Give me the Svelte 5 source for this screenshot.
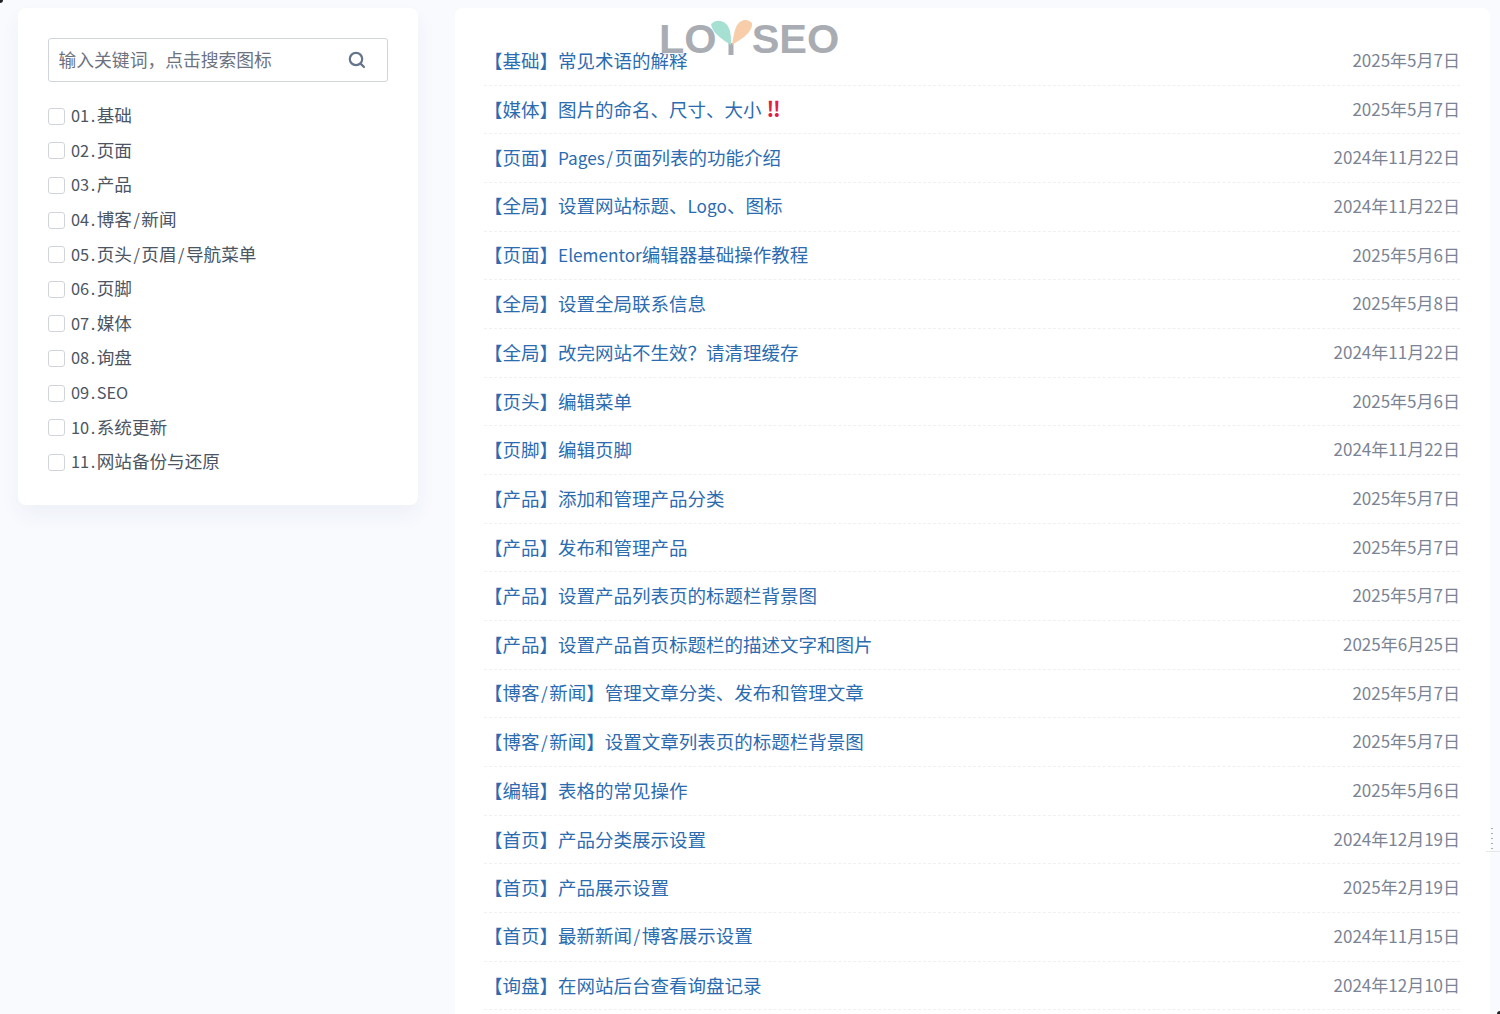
<script>
  const cats = ['01.基础','02.页面','03.产品','04.博客/新闻','05.页头/页眉/导航菜单','06.页脚','07.媒体','08.询盘','09.SEO','10.系统更新','11.网站备份与还原'];
  const rows = [
    ['【基础】常见术语的解释','2025年5月7日'],
    ['【媒体】图片的命名、尺寸、大小','2025年5月7日',true],
    ['【页面】Pages/页面列表的功能介绍','2024年11月22日'],
    ['【全局】设置网站标题、Logo、图标','2024年11月22日'],
    ['【页面】Elementor编辑器基础操作教程','2025年5月6日'],
    ['【全局】设置全局联系信息','2025年5月8日'],
    ['【全局】改完网站不生效？请清理缓存','2024年11月22日'],
    ['【页头】编辑菜单','2025年5月6日'],
    ['【页脚】编辑页脚','2024年11月22日'],
    ['【产品】添加和管理产品分类','2025年5月7日'],
    ['【产品】发布和管理产品','2025年5月7日'],
    ['【产品】设置产品列表页的标题栏背景图','2025年5月7日'],
    ['【产品】设置产品首页标题栏的描述文字和图片','2025年6月25日'],
    ['【博客/新闻】管理文章分类、发布和管理文章','2025年5月7日'],
    ['【博客/新闻】设置文章列表页的标题栏背景图','2025年5月7日'],
    ['【编辑】表格的常见操作','2025年5月6日'],
    ['【首页】产品分类展示设置','2024年12月19日'],
    ['【首页】产品展示设置','2025年2月19日'],
    ['【首页】最新新闻/博客展示设置','2024年11月15日'],
    ['【询盘】在网站后台查看询盘记录','2024年12月10日']
  ];
  // Latin runs and punctuation are set narrower / wider than the CJK around them
  const parts = (s) => s.split(/([A-Za-z0-9]+|[.\/])/).filter(Boolean).map((t) => ({
    t,
    c: /^[.\/]$/.test(t) ? 'pn' : /^[A-Za-z0-9]/.test(t) ? 'lat' : ''
  }));
</script>

{#snippet mixed(s)}{#each parts(s) as p}{#if p.c}<span class={p.c}>{p.t}</span>{:else}{p.t}{/if}{/each}{/snippet}

<div class="page">
  <aside class="side">
    <div class="search">
      <span class="ph">输入关键词，点击搜索图标</span>
      <svg width="18" height="18" viewBox="0 0 18 18" fill="none" stroke="#64748b" stroke-width="2.2" stroke-linecap="round"><circle cx="8" cy="8" r="6.2"/><path d="M12.6 12.6L16 16"/></svg>
    </div>
    <ul class="cats">
      {#each cats as c}
        <li><span class="box"></span><span>{@render mixed(c)}</span></li>
      {/each}
    </ul>
  </aside>
  <main class="list">
    {#each rows as r}
      <div class="row">
        <span class="title">{@render mixed(r[0])}{#if r[2]}<span class="bang">‼</span>{/if}</span>
        <span class="date">{r[1]}</span>
      </div>
    {/each}
    <div class="logo">
      <span>LO</span>
      <svg width="44" height="40" viewBox="0 0 44 40">
        <path d="M21 36V24" stroke="#a9adb3" stroke-width="5" fill="none"/>
        <path d="M1 5C7 -1 17 1 20 12C21 17 21 22 21 26C13 21 2 14 1 5Z" fill="#a5e0d3"/>
        <path d="M42 4C37 -1 30 0 26 8C24 13 23 20 22 26C30 21 43 14 42 4Z" fill="#f8cdaa"/>
      </svg>
      <span>SEO</span>
    </div>
  </main>
  <div class="tick"></div>
  <i class="corner tl"></i>
  <i class="corner br"></i>
</div>

<style>
  :global(body) {
    margin: 0;
    background: #f8fafe;
  }
  .page {
    position: relative;
    display: flex;
    align-items: flex-start;
    gap: 37px;
    height: 1014px;
    overflow: hidden;
    padding: 8px 10px 0 18px;
    box-sizing: border-box;
    font-family: "Noto Sans CJK SC", sans-serif;
  }
  .side {
    flex: none;
    width: 400px;
    height: 497px;
    box-sizing: border-box;
    padding: 30px 30px 0;
    background: #fff;
    border-radius: 8px;
    box-shadow: 0 10px 20px rgba(30, 50, 90, 0.05);
  }
  .search {
    display: flex;
    align-items: center;
    height: 44px;
    box-sizing: border-box;
    padding: 0 12px 0 9.5px;
    gap: 76px;
    border: 1px solid #d1d5db;
    border-radius: 3px;
  }
  .ph {
    font-size: 17.8px;
    line-height: 24px;
    padding-bottom: 2px;
    color: #6b7280;
  }
  .cats {
    list-style: none;
    margin: 16px 0 0;
    padding: 0;
  }
  .cats li {
    display: flex;
    align-items: center;
    gap: 6px;
    height: 34.6px;
    font-size: 17.6px;
    line-height: 24px;
    color: #4b5563;
  }
  .lat {
    font-size: 0.93em;
  }
  .pn {
    font-size: 0.93em;
    padding: 0 1.5px;
  }
  .box {
    flex: none;
    width: 15px;
    height: 15px;
    margin-top: 2px;
    border: 1px solid #d1d5db;
    border-radius: 3px;
  }
  .list {
    position: relative;
    flex: 1;
    height: 1030px;
    box-sizing: border-box;
    padding: 29px 30px 0 29px;
    background: #fff;
    border-radius: 8px 8px 0 0;
    overflow: hidden;
  }
  .row {
    display: flex;
    justify-content: space-between;
    align-items: center;
    height: 48.68px;
    box-sizing: border-box;
    padding-bottom: 2px;
    border-bottom: 1px dashed #eef0f3;
    line-height: 26px;
  }
  .title {
    font-size: 18.5px;
    color: #2b6cb0;
  }
  .bang {
    color: #e11d48;
    margin-left: 5px;
    font-size: 21px;
    line-height: 0;
    font-weight: 700;
  }
  .date {
    font-size: 17px;
    color: #7b8494;
  }
  .logo {
    position: absolute;
    left: 204px;
    top: 8.5px;
    display: flex;
    align-items: center;
    font: 700 41.5px/44px "Liberation Sans", sans-serif;
    color: #a9adb3;
    text-shadow: 1px 1px 1px #fff;
  }
  .logo svg {
    margin: 0 -2px 0 -7px;
  }
  .tick {
    position: absolute;
    right: 0;
    top: 826px;
    width: 14px;
    height: 25px;
    border-bottom: 1px solid #e5e7eb;
    background: radial-gradient(circle, #a8adb6 0.8px, transparent 1px) 5px 0 / 2px 5px repeat-y;
  }
  .corner {
    position: absolute;
    width: 3px;
    height: 3px;
    background: #222;
  }
  .tl {
    left: 0;
    top: 0;
    border-bottom-right-radius: 3px;
  }
  .br {
    right: 0;
    bottom: 0;
    border-top-left-radius: 3px;
  }
</style>
